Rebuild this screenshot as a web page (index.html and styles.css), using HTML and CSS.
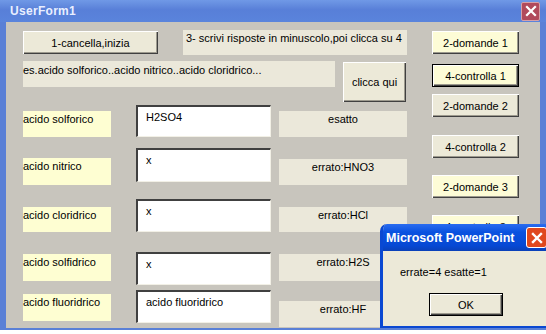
FILE: index.html
```html
<!DOCTYPE html>
<html lang="it">
<head>
  <meta charset="UTF-8">
  <title>UserForm1</title>
  <link rel="stylesheet" href="styles.css">
</head>
<body>

  <div class="window">
    <div class="titlebar">
      <span class="title">UserForm1</span>
      <span class="close-btn">
        <svg width="12" height="12" viewBox="0 0 12 12"><path d="M2 2 L10 10 M10 2 L2 10" stroke="#fff" stroke-width="2.2" stroke-linecap="square"/></svg>
      </span>
    </div>

    <div class="client">
      <div class="main">
        <div class="top-row">
          <button class="btn btn-start">1-cancella,inizia</button>
          <div class="info info-steps">3- scrivi risposte in minuscolo,poi clicca su 4</div>
        </div>

        <div class="hint-row">
          <div class="info info-hint">es.acido solforico..acido nitrico..acido cloridrico...</div>
          <button class="btn btn-go">clicca qui</button>
        </div>

        <!-- una riga per ogni acido -->
        <div class="quiz-row r1">
          <div class="name">acido solforico</div>
          <div class="answer">H2SO4</div>
          <div class="result">esatto</div>
        </div>
        <div class="quiz-row r2">
          <div class="name">acido nitrico</div>
          <div class="answer">x</div>
          <div class="result">errato:HNO3</div>
        </div>
        <div class="quiz-row r3">
          <div class="name">acido cloridrico</div>
          <div class="answer">x</div>
          <div class="result">errato:HCl</div>
        </div>
        <div class="quiz-row r4">
          <div class="name">acido solfidrico</div>
          <div class="answer">x</div>
          <div class="result">errato:H2S</div>
        </div>
        <div class="quiz-row r5">
          <div class="name">acido fluoridrico</div>
          <div class="answer">acido fluoridrico</div>
          <div class="result">errato:HF</div>
        </div>
      </div>

      <div class="side">
        <button class="btn side-btn yellow">2-domande 1</button>
        <button class="btn side-btn yellow focus">4-controlla 1</button>
        <button class="btn side-btn">2-domande 2</button>
        <button class="btn side-btn">4-controlla 2</button>
        <button class="btn side-btn yellow">2-domande 3</button>
        <button class="btn side-btn yellow">4-controlla 3</button>
      </div>
    </div>
  </div>

  <!-- finestra del messaggio -->
  <div class="msgbox">
    <div class="msg-title">
      <span>Microsoft PowerPoint</span>
      <span class="msg-close">
        <svg width="12" height="12" viewBox="0 0 12 12"><path d="M2 2 L10 10 M10 2 L2 10" stroke="#fff" stroke-width="2.4" stroke-linecap="square"/></svg>
      </span>
    </div>
    <div class="msg-body">
      <p class="msg-text">errate=4 esatte=1</p>
      <button class="btn msg-ok">OK</button>
    </div>
  </div>

</body>
</html>
```

FILE: styles.css
```css
body {
  margin: 0;
  background-color: #fff;
  font-family: "Liberation Sans", Arial, sans-serif;
  font-size: 11px;
  color: #000;
}
.window {
  width: 546px;
  height: 330px;
  display: flex;
  flex-direction: column;
}
.titlebar {
  height: 22px;
  display: flex;
  align-items: center;
  justify-content: space-between;
  padding: 0 6px 0 10px;
  background: linear-gradient(#7099e6, #587fd8 45%, #5a84dc);
}
.title {
  color: #e9efff;
  font-weight: bold;
  font-size: 12px;
  letter-spacing: 0.3px;
}
.close-btn {
  width: 17px;
  height: 17px;
  display: flex;
  align-items: center;
  justify-content: center;
  background-color: #b14a5c;
  border: 1px solid #d6a0a8;
  border-radius: 2px;
}
.client {
  flex: 1;
  display: flex;
  background-color: #c8c5bd;
  border-left: 6px solid #5a80d6;
  border-right: 6px solid #5a80d6;
  border-bottom: 2px solid #5a80d6;
  padding: 8px 0 0 17px;
  overflow: hidden;
}
.main {
  width: 384px;
  display: flex;
  flex-direction: column;
}
.btn {
  font-family: inherit;
  font-size: 11px;
  color: #000;
  background-color: #ece9d8;
  border: none;
  padding: 0;
  box-shadow: inset 1px 1px 0 #fff, inset -1px -1px 0 #404040, inset -2px -2px 0 #9d9a8e;
}
.top-row {
  display: flex;
  align-items: flex-start;
}
.btn-start {
  width: 135px;
  height: 23px;
  margin-top: 1px;
}
.info {
  background-color: #ebe8da;
  padding: 2px 3px;
  box-sizing: border-box;
  white-space: nowrap;
}
.info-steps {
  width: 224px;
  height: 25px;
  margin-left: 25px;
}
.hint-row {
  display: flex;
  align-items: flex-start;
  margin-top: 6px;
}
.info-hint {
  width: 312px;
  height: 26px;
  padding: 3px 0 0 0;
}
.btn-go {
  width: 63px;
  height: 40px;
  margin-left: 8px;
  margin-top: 1px;
}
.quiz-row {
  display: flex;
  align-items: flex-start;
}
.name {
  width: 88px;
  height: 26px;
  padding-top: 2px;
  box-sizing: border-box;
  background-color: #fefed2;
}
.answer {
  width: 135px;
  height: 33px;
  margin-left: 25px;
  box-sizing: border-box;
  padding: 4px 8px;
  background-color: #fff;
  border-top: 2px solid #404040;
  border-left: 2px solid #404040;
  border-right: 1px solid #f2f0e6;
  border-bottom: 1px solid #f2f0e6;
}
.result {
  width: 128px;
  height: 26px;
  margin-left: 8px;
  padding-top: 2px;
  box-sizing: border-box;
  text-align: center;
  background-color: #ebe8da;
}
.r1 { margin-top: 3px; }
.r1 .answer { height: 32px; }
.r1 .name, .r1 .result { margin-top: 6px; }
.r2 { margin-top: 11px; }
.r2 .answer { height: 34px; }
.r2 .name { margin-top: 10px; height: 27px; }
.r2 .result { margin-top: 11px; }
.r3 { margin-top: 14px; }
.r3 .name, .r3 .result { margin-top: 8px; height: 25px; }
.r4 { margin-top: 20px; }
.r4 .name, .r4 .result { margin-top: 2px; height: 27px; }
.r5 { margin-top: 5px; }
.r5 .name { margin-top: 4px; height: 27px; }
.r5 .result { margin-top: 11px; }
.side {
  width: 87px;
  margin-left: 25px;
  margin-top: 1px;
  display: flex;
  flex-direction: column;
}
.side-btn {
  height: 23px;
  flex-shrink: 0;
}
.side-btn:nth-child(2) { margin-top: 10px; }
.side-btn:nth-child(3) { margin-top: 7px; }
.side-btn:nth-child(n+4) { margin-top: 17px; }
.side-btn:nth-child(4) { margin-top: 18px; }
.yellow {
  background-color: #fdfcd6;
}
.focus {
  border: 1px solid #000;
}
.msgbox {
  position: absolute;
  left: 380px;
  top: 224px;
  width: 190px;
  height: 104px;
  display: flex;
  flex-direction: column;
  border-left: 3px solid #0a48d2;
  border-bottom: 2px solid #0a48d2;
  border-top-left-radius: 7px;
  box-sizing: border-box;
  overflow: hidden;
}
.msg-title {
  height: 27px;
  display: flex;
  align-items: center;
  justify-content: space-between;
  padding: 0 0 0 3px;
  color: #fff;
  font-weight: bold;
  font-size: 12.5px;
  background: linear-gradient(#2a6cf0, #0a52e0 30%, #0648d4 80%, #0a40b8);
}
.msg-close {
  width: 19px;
  height: 19px;
  margin-right: 23px;
  display: flex;
  align-items: center;
  justify-content: center;
  background-color: #e0481e;
  border: 1px solid #fff;
  border-radius: 3px;
}
.msg-body {
  flex: 1;
  background-color: #ece9d8;
  position: relative;
}
.msg-text {
  margin: 15px 0 0 17px;
}
.msg-ok {
  position: absolute;
  left: 46px;
  top: 42px;
  width: 74px;
  height: 23px;
  border: 1px solid #000;
}
```
